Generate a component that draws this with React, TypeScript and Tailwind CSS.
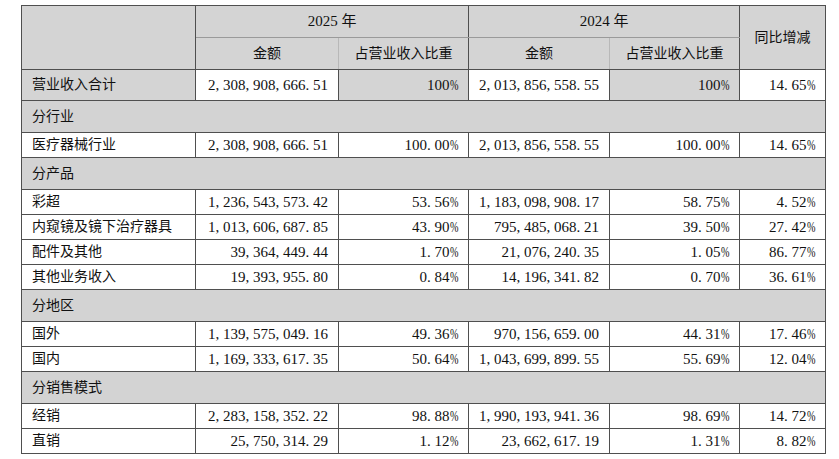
type Row =
  | { kind: 'section'; label: string }
  | { kind: 'data'; label: string; a1: string; p1: string; a2: string; p2: string; yoy: string }

const rows: Row[] = [
  { kind: 'section', label: '分行业' },
  { kind: 'data', label: '医疗器械行业', a1: '2,308,908,666.51', p1: '100.00%', a2: '2,013,856,558.55', p2: '100.00%', yoy: '14.65%' },
  { kind: 'section', label: '分产品' },
  { kind: 'data', label: '彩超', a1: '1,236,543,573.42', p1: '53.56%', a2: '1,183,098,908.17', p2: '58.75%', yoy: '4.52%' },
  { kind: 'data', label: '内窥镜及镜下治疗器具', a1: '1,013,606,687.85', p1: '43.90%', a2: '795,485,068.21', p2: '39.50%', yoy: '27.42%' },
  { kind: 'data', label: '配件及其他', a1: '39,364,449.44', p1: '1.70%', a2: '21,076,240.35', p2: '1.05%', yoy: '86.77%' },
  { kind: 'data', label: '其他业务收入', a1: '19,393,955.80', p1: '0.84%', a2: '14,196,341.82', p2: '0.70%', yoy: '36.61%' },
  { kind: 'section', label: '分地区' },
  { kind: 'data', label: '国外', a1: '1,139,575,049.16', p1: '49.36%', a2: '970,156,659.00', p2: '44.31%', yoy: '17.46%' },
  { kind: 'data', label: '国内', a1: '1,169,333,617.35', p1: '50.64%', a2: '1,043,699,899.55', p2: '55.69%', yoy: '12.04%' },
  { kind: 'section', label: '分销售模式' },
  { kind: 'data', label: '经销', a1: '2,283,158,352.22', p1: '98.88%', a2: '1,990,193,941.36', p2: '98.69%', yoy: '14.72%' },
  { kind: 'data', label: '直销', a1: '25,750,314.29', p1: '1.12%', a2: '23,662,617.19', p2: '1.31%', yoy: '8.82%' },
]

// mimic the wide SimSun punctuation: a gap after every comma and dot
const fmt = (s: string) => s.replace(/([,.])/g, '$1 ')

function Pct({ v }: { v: string }) {
  const n = fmt(v.replace('%', ''))
  return (
    <>
      {n}
      <span className="inline-block w-[8.5px] text-left">
        <span className="inline-block scale-x-[0.68] origin-left">%</span>
      </span>
    </>
  )
}

const cell = 'border border-[#4f4f4f] px-0'
const num = 'text-right text-[15px] pr-[10px]'
const label = 'text-left text-[14px] pl-[10px]'

export default function App() {
  return (
    <div
      className="w-[839px] h-[459px] bg-white pl-[21px] pt-[5px] text-[#111]"
      style={{ fontFamily: '"Liberation Serif", "Noto Sans CJK SC", serif' }}
    >
      <table className="table-fixed border-collapse w-[804px] leading-none">
        <colgroup>
          <col className="w-[174px]" />
          <col className="w-[143px]" />
          <col className="w-[130px]" />
          <col className="w-[141px]" />
          <col className="w-[130px]" />
          <col className="w-[86px]" />
        </colgroup>
        <thead className="bg-[#d4d4d4] text-[14px] font-normal">
          <tr className="h-[32px]">
            <th rowSpan={2} className={`${cell} font-normal`} />
            <th colSpan={2} className={`${cell} border-b-[#9a9a9a] font-normal text-[15px]`}>2025 年</th>
            <th colSpan={2} className={`${cell} border-b-[#9a9a9a] font-normal text-[15px]`}>2024 年</th>
            <th rowSpan={2} className={`${cell} font-normal`}>同比增减</th>
          </tr>
          <tr className="h-[32px]">
            <th className={`${cell} border-r-[#b8b8b8] font-normal`}>金额</th>
            <th className={`${cell} font-normal`}>占营业收入比重</th>
            <th className={`${cell} border-r-[#b8b8b8] font-normal`}>金额</th>
            <th className={`${cell} font-normal`}>占营业收入比重</th>
          </tr>
        </thead>
        <tbody>
          <tr className="h-[31px]">
            <td className={`${cell} ${label} bg-[#d4d4d4]`}>营业收入合计</td>
            <td className={`${cell} ${num} bg-white`}>{fmt('2,308,908,666.51')}</td>
            <td className={`${cell} ${num} pr-[9px] bg-[#d4d4d4]`}><Pct v="100%" /></td>
            <td className={`${cell} ${num} bg-white`}>{fmt('2,013,856,558.55')}</td>
            <td className={`${cell} ${num} pr-[9px] bg-[#d4d4d4]`}><Pct v="100%" /></td>
            <td className={`${cell} ${num} pr-[8px] bg-white`}><Pct v="14.65%" /></td>
          </tr>
          {rows.map((r, i) =>
            r.kind === 'section' ? (
              <tr key={i} className="h-[32px] bg-[#d3d3d3]">
                <td colSpan={6} className={`${cell} ${label}`}>{r.label}</td>
              </tr>
            ) : (
              <tr key={i} className="h-[25px] bg-white">
                <td className={`${cell} ${label}`}>{r.label}</td>
                <td className={`${cell} ${num}`}>{fmt(r.a1)}</td>
                <td className={`${cell} ${num} pr-[9px]`}><Pct v={r.p1} /></td>
                <td className={`${cell} ${num}`}>{fmt(r.a2)}</td>
                <td className={`${cell} ${num} pr-[9px]`}><Pct v={r.p2} /></td>
                <td className={`${cell} ${num} pr-[8px]`}><Pct v={r.yoy} /></td>
              </tr>
            )
          )}
        </tbody>
      </table>
    </div>
  )
}
